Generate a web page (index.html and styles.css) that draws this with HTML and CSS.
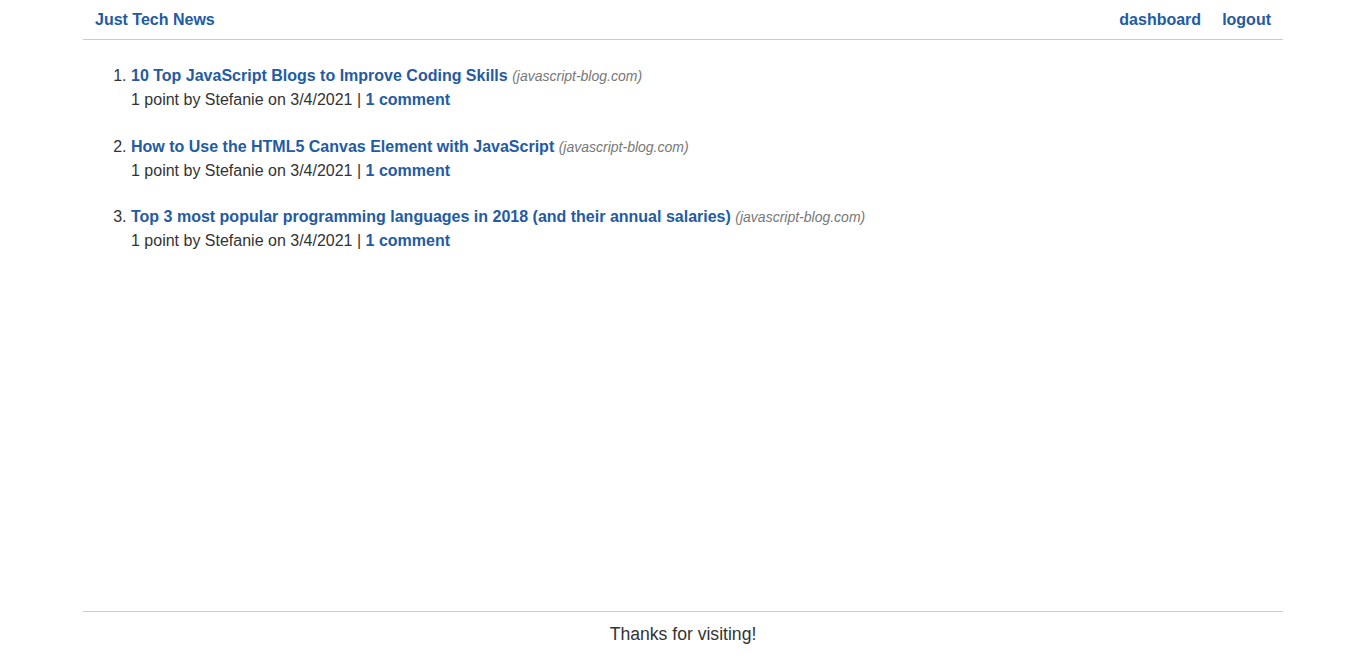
FILE: index.html
```html
<!DOCTYPE html>
<html lang="en">
<head>
<meta charset="utf-8">
<title>Just Tech News</title>
<link rel="stylesheet" href="styles.css">
</head>
<body>
<header class="site-header">
  <a class="brand" href="#">Just Tech News</a>
  <nav class="nav">
    <a href="#">dashboard</a>
    <a href="#">logout</a>
  </nav>
</header>
<main class="main">
  <ol class="posts">
    <li class="post">
      <div class="post-title"><a href="#">10 Top JavaScript Blogs to Improve Coding Skills</a> <span class="domain">(javascript-blog.com)</span></div>
      <div class="post-meta">1 point by Stefanie on 3/4/2021 | <a href="#">1 comment</a></div>
    </li>
    <li class="post">
      <div class="post-title"><a href="#">How to Use the HTML5 Canvas Element with JavaScript</a> <span class="domain">(javascript-blog.com)</span></div>
      <div class="post-meta">1 point by Stefanie on 3/4/2021 | <a href="#">1 comment</a></div>
    </li>
    <li class="post">
      <div class="post-title"><a href="#">Top 3 most popular programming languages in 2018 (and their annual salaries)</a> <span class="domain">(javascript-blog.com)</span></div>
      <div class="post-meta">1 point by Stefanie on 3/4/2021 | <a href="#">1 comment</a></div>
    </li>
  </ol>
</main>
<footer class="site-footer">Thanks for visiting!</footer>
</body>
</html>
```
FILE: styles.css
```css
html, body {
  margin: 0;
  padding: 0;
}
body {
  font-family: "Liberation Sans", Arial, sans-serif;
  font-size: 16px;
  color: #333;
  background: #fff;
  min-height: 100vh;
  display: flex;
  flex-direction: column;
}
a {
  color: #235ba3;
  font-weight: bold;
  text-decoration: none;
}
.site-header {
  width: 1200px;
  margin: 0 auto;
  box-sizing: border-box;
  padding: 8px 12px;
  line-height: 23px;
  border-bottom: 1px solid #ccc;
  display: flex;
  justify-content: space-between;
  align-items: center;
}
.nav {
  display: flex;
  gap: 21px;
}
.main {
  flex: 1;
  width: 1200px;
  margin: 0 auto;
}
.posts {
  margin: 24px 0 0 0;
  padding-left: 48px;
  line-height: 24px;
}
.post {
  margin-bottom: 22.5px;
}
.domain {
  font-style: italic;
  font-size: 14px;
  color: #777;
}
.site-footer {
  width: 1200px;
  margin: 0 auto;
  box-sizing: border-box;
  border-top: 1px solid #ccc;
  padding: 9px 0 10px;
  line-height: 26px;
  font-size: 17.6px;
  text-align: center;
}
```
